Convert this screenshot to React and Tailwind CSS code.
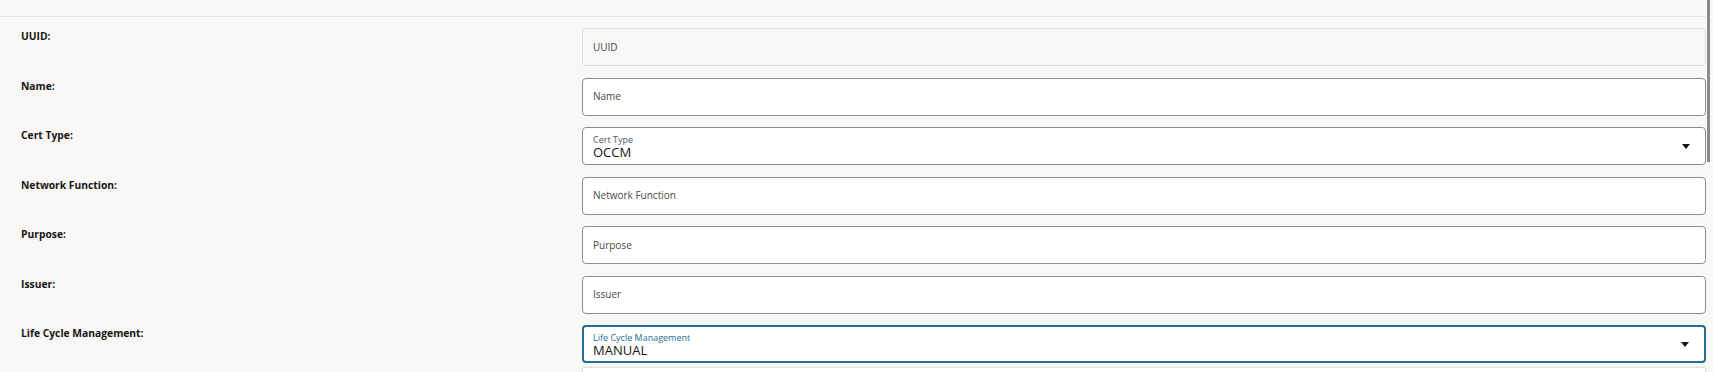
import { useState } from 'react'

const fields = [
  { id: 'uuid', label: 'UUID:', placeholder: 'UUID', readOnly: true },
  { id: 'name', label: 'Name:', placeholder: 'Name' },
  { id: 'certType', label: 'Cert Type:', select: 'Cert Type', value: 'OCCM' },
  { id: 'nf', label: 'Network Function:', placeholder: 'Network Function' },
  { id: 'purpose', label: 'Purpose:', placeholder: 'Purpose' },
  { id: 'issuer', label: 'Issuer:', placeholder: 'Issuer' },
  { id: 'lcm', label: 'Life Cycle Management:', select: 'Life Cycle Management', value: 'MANUAL', focused: true },
]

function Caret() {
  return (
    <svg width="8" height="5" viewBox="0 0 8 5" className="shrink-0">
      <path d="M0 0 H8 L4 5 Z" fill="#161513" />
    </svg>
  )
}

function Campo({ f }) {
  if (f.select) {
    return (
      <div
        className={
          'h-[38px] rounded-[4px] bg-white flex items-center pr-[15px] ' +
          (f.focused
            ? 'border-2 border-[#1f6f91] pl-[9px]'
            : 'border border-[#8f8c89] pl-[10px]')
        }
      >
        <div className="flex-1 flex flex-col pt-[1px]">
          <span
            className={
              'text-[9px] leading-[11px] ' +
              (f.focused ? 'text-[#1f6f91]' : 'text-[#4d5866]')
            }
          >
            {f.select}
          </span>
          <span className="text-[13px] leading-[15px] text-[#161513]">{f.value}</span>
        </div>
        <Caret />
      </div>
    )
  }
  return (
    <div
      className={
        'h-[38px] rounded-[4px] flex items-center pl-[10px] ' +
        (f.readOnly
          ? 'bg-[#f9f8f6] border border-[#e0dedb]'
          : 'bg-white border border-[#8f8c89]')
      }
    >
      <span className="text-[10px] text-[#4a4744]">{f.placeholder}</span>
    </div>
  )
}

export default function App() {
  const [datos] = useState(fields)

  return (
    <div
      className="w-full h-[372px] overflow-hidden bg-[#f9f8f6] flex"
      style={{ fontFamily: '"Open Sans", "Noto Sans", sans-serif' }}
    >
      {/* ── Contenido ─────────────────────────────────────── */}
      <div className="flex-1 flex flex-col">
        <div className="h-[17px] border-b border-[#e4e5e3] shrink-0" />

        <div className="flex flex-col gap-[11.5px] pt-[11px] pl-[21px]">
          {datos.map(f => (
            <div key={f.id} className="flex items-start">
              <div className="w-[561px] shrink-0 pt-[1px] text-[10.3px] leading-[14px] font-bold text-[#161513]">
                {f.label}
              </div>
              <div className="flex-1">
                <Campo f={f} />
              </div>
            </div>
          ))}
          {/* lista desplegable que asoma */}
          <div className="flex -mt-[7.5px]">
            <div className="w-[561px] shrink-0" />
            <div className="flex-1 h-[20px] bg-white border border-[#e3e1de] rounded-t-[3px] shadow-sm" />
          </div>
        </div>
      </div>

      {/* ── Scrollbar ─────────────────────────────────────── */}
      <div className="w-[7px] shrink-0 pl-[1px]">
        <div className="w-[3px] h-[162px] bg-[#8b8b8b]" />
      </div>
    </div>
  )
}
